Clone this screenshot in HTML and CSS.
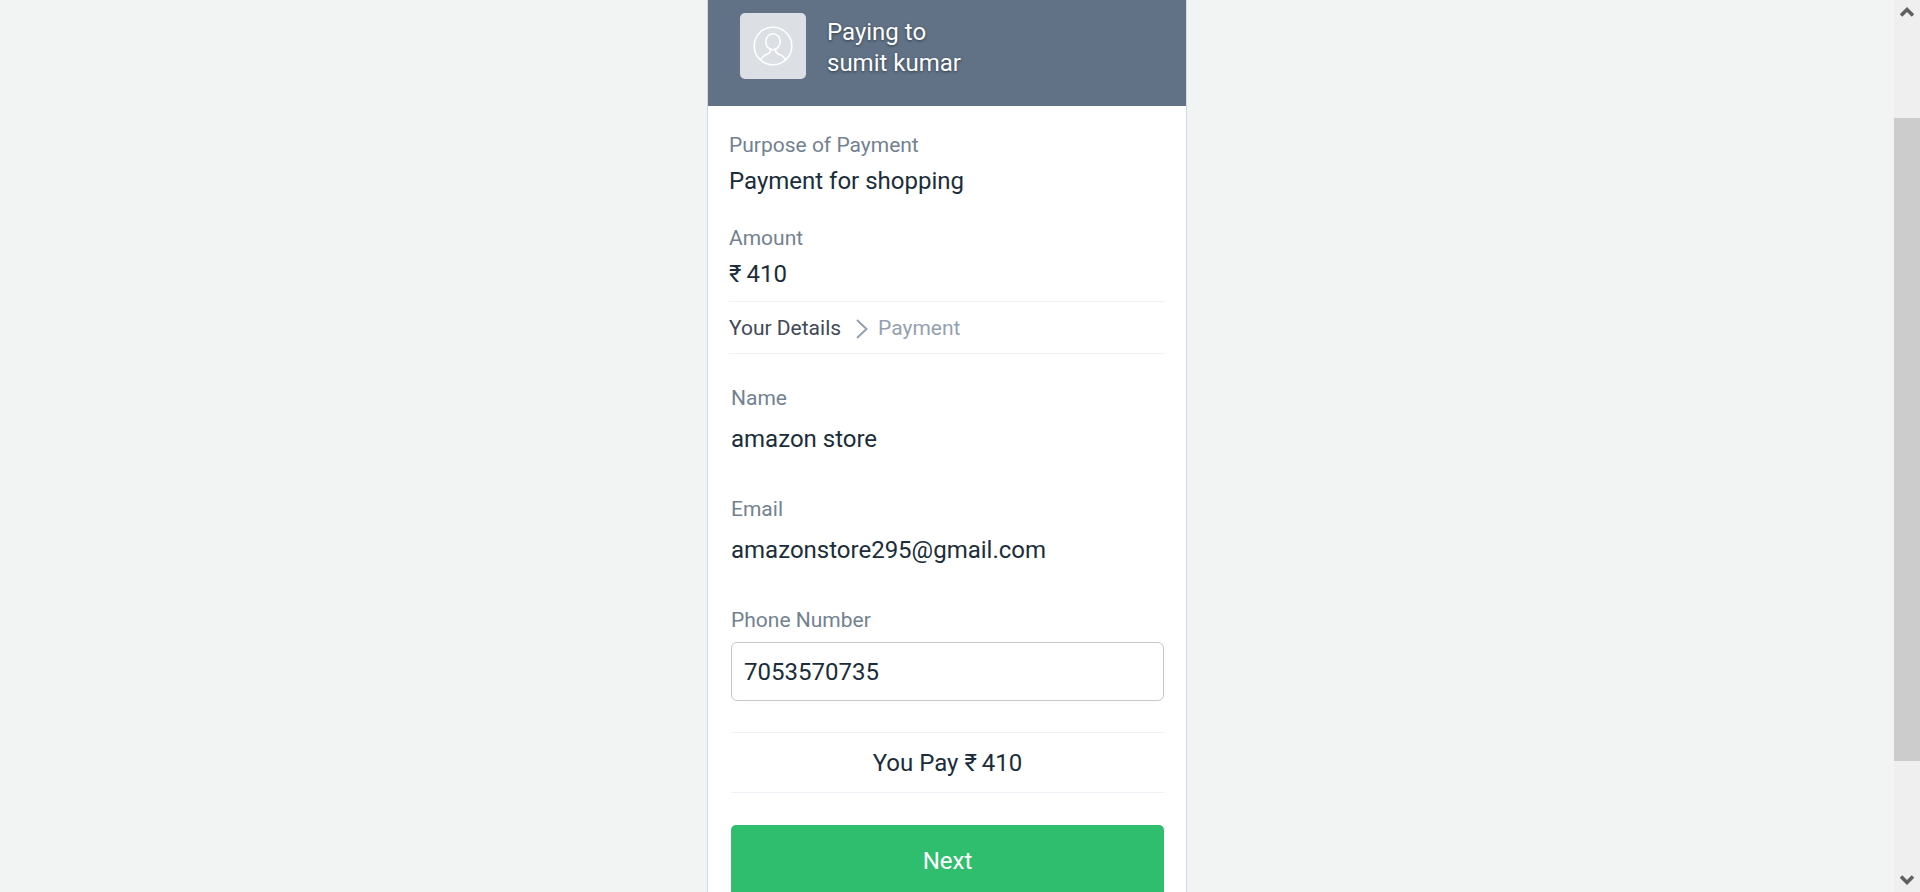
FILE: index.html
```html
<!DOCTYPE html>
<html lang="en">
<head>
<meta charset="utf-8">
<title>Paying to sumit kumar</title>
<link rel="stylesheet" href="styles.css">
</head>
<body>
<div class="viewport">
  <main class="page">
    <section class="card">
      <header class="payee">
        <div class="avatar">
          <svg class="avatar-icon" viewBox="0 0 40 40" aria-hidden="true">
            <circle cx="20" cy="20" r="18.800"/>
            <ellipse cx="20" cy="15.700" rx="7.200" ry="8"/>
            <path d="M17.500 23.500c0 2.500-.5 3.400-2.500 4.300C12 29.200 9 30 7.500 34"/>
            <path d="M22.500 23.500c0 2.500.5 3.400 2.500 4.300C28 29.200 31 30 32.500 34"/>
          </svg>
        </div>
        <p class="payee-name">Paying to<br>sumit kumar</p>
      </header>
      <div class="content">
        <dl class="summary">
          <div class="entry">
            <dt class="label">Purpose of Payment</dt>
            <dd class="value">Payment for shopping</dd>
          </div>
          <div class="entry">
            <dt class="label">Amount</dt>
            <dd class="value"><span class="currency">₹</span>410</dd>
          </div>
        </dl>
        <nav class="steps" aria-label="Progress">
          <span class="step step-current">Your Details</span>
          <svg class="chevron" viewBox="0 0 12 20" aria-hidden="true"><path d="M1 1l9.500 9L1 19"/></svg>
          <span class="step">Payment</span>
        </nav>
        <form class="form">
          <dl class="details">
            <div class="detail">
              <dt class="label">Name</dt>
              <dd class="value">amazon store</dd>
            </div>
            <div class="detail">
              <dt class="label">Email</dt>
              <dd class="value">amazonstore295@gmail.com</dd>
            </div>
          </dl>
          <div class="field">
            <label class="label" for="phone">Phone Number</label>
            <input class="input" id="phone" type="tel" value="7053570735">
          </div>
          <p class="total">You Pay <span class="currency">₹</span>410</p>
          <button class="next" type="button">Next</button>
        </form>
      </div>
    </section>
  </main>
  <div class="scrollbar" aria-hidden="true">
    <svg class="arrow" viewBox="0 0 14 12"><path d="M1 9.500l6-6 6 6"/></svg>
    <div class="track"><div class="thumb"></div></div>
    <svg class="arrow" viewBox="0 0 14 12"><path d="M1 2.500l6 6 6-6"/></svg>
  </div>
</div>
</body>
</html>
```

FILE: styles.css
```css
* { box-sizing: border-box; }

body, p, dl, dd { margin: 0; }

body {
  font-family: Roboto, "Liberation Sans", sans-serif;
  font-size: 24px;
  line-height: 32px;
  color: #1b2d3b;
  background: #f1f4f3;
}

.viewport {
  display: flex;
  height: 100vh;
  overflow: hidden;
}

.page {
  flex: 1;
  display: flex;
  justify-content: center;
  align-items: flex-start;
}

.card {
  width: 100%;
  max-width: 480px;
  background: #fff;
  border: solid #cfdae8;
  border-width: 0 1px;
}

.payee {
  display: flex;
  gap: 21px;
  padding: 13px 32px 27px;
  background: #617287;
}

.avatar {
  display: flex;
  align-items: center;
  justify-content: center;
  width: 66px;
  height: 66px;
  border-radius: 5px;
  background: #dcdfe4;
}

.avatar-icon {
  width: 40px;
  height: 40px;
  fill: none;
  stroke: #fff;
  stroke-width: 1.6;
}

.payee-name {
  padding-top: 4px;
  line-height: 31px;
  color: #fff;
  text-shadow: 0 1px 3px rgba(0, 0, 0, 0.5);
}

.content { padding: 25px 21px 32px; }

.summary {
  display: flex;
  flex-direction: column;
  gap: 27px;
  padding-bottom: 11px;
}

.entry {
  display: flex;
  flex-direction: column;
  gap: 6px;
}

.label {
  font-size: 21px;
  line-height: 28px;
  color: #748190;
}

.currency { margin-right: 5px; }

.steps {
  display: flex;
  align-items: center;
  height: 53px;
  border: solid #f0f2f3;
  border-width: 1px 0;
}

.step {
  font-size: 21px;
  line-height: 28px;
  color: #94a1b2;
}

.step-current { color: #414957; }

.chevron {
  width: 12px;
  height: 20px;
  margin: 3px 10px 0 15px;
  fill: none;
  stroke: #94a1b2;
  stroke-width: 2;
}

.form {
  display: flex;
  flex-direction: column;
  padding: 30px 1px 0 2px;
}

.details {
  display: flex;
  flex-direction: column;
  gap: 40px;
}

.detail {
  display: flex;
  flex-direction: column;
  gap: 11px;
}

.field {
  display: flex;
  flex-direction: column;
  gap: 8px;
  margin-top: 40px;
}

.input {
  width: 100%;
  height: 59px;
  padding: 0 12px;
  border: 1px solid #c8c8c8;
  border-radius: 6px;
  font: inherit;
  color: inherit;
  background: #fff;
}

.total {
  margin: 31px 0 32px;
  padding: 14px 0 13px;
  border: solid #f0f1f7;
  border-width: 1px 0;
  text-align: center;
}

.next {
  padding: 20px;
  border: 0;
  border-radius: 5px;
  font: inherit;
  color: #fff;
  background: #2fbe6e;
}

.scrollbar {
  display: flex;
  flex-direction: column;
  align-items: center;
  justify-content: space-between;
  width: 26px;
  padding: 6px 0;
  background: #efefef;
}

.arrow {
  width: 14px;
  height: 12px;
  fill: none;
  stroke: #606060;
  stroke-width: 3.6;
}

.track {
  flex: 1;
  width: 100%;
  padding: 100px 0 113px;
}

.thumb {
  height: 100%;
  background: #cccccc;
}
```
